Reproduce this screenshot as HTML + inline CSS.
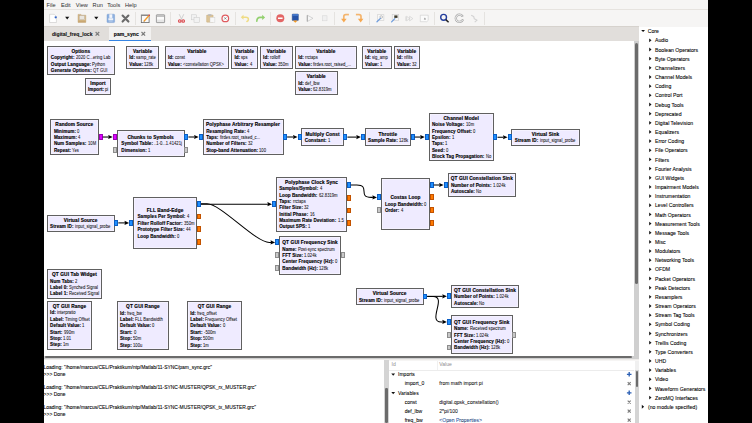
<!DOCTYPE html><html><head><meta charset="utf-8"><style>
*{margin:0;padding:0;box-sizing:border-box}
html,body{width:752px;height:423px;overflow:hidden;background:#000}
body{position:relative;font-family:"Liberation Sans",sans-serif;color:#000}
.a{position:absolute}
.blk{position:absolute;background:#efebff;border:1px solid #606060;box-shadow:inset 0 0 0 0.5px #fbfaff}
.bt{position:absolute;text-align:center;font-weight:bold;font-size:4.75px;line-height:6px;white-space:nowrap;letter-spacing:0.12px;-webkit-text-stroke:0.15px #000}
.br{position:absolute;font-size:4.6px;line-height:6px;white-space:nowrap;color:#222}
.br b{color:#000;letter-spacing:0.05px;-webkit-text-stroke:0.12px #000}
.br span{display:inline-block;transform:scaleX(0.91);transform-origin:0 50%;color:#111;-webkit-text-stroke:0.05px #111}
.pt{position:absolute;width:4.1px;height:5.9px;border:0.6px solid}
.conn{position:absolute;left:0;top:0}
.tt{position:absolute;font-size:5.15px;line-height:7px;white-space:nowrap;color:#000;-webkit-text-stroke:0.08px #000}
.tri-r{position:absolute;width:0;height:0;border-left:2.8px solid #111;border-top:1.9px solid transparent;border-bottom:1.9px solid transparent}
.tri-d{position:absolute;width:0;height:0;border-top:2.8px solid #111;border-left:1.9px solid transparent;border-right:1.9px solid transparent}
.menu{position:absolute;top:1.6px;font-size:5.6px;line-height:7px;color:#2e2e2e}
.sep{position:absolute;top:12px;width:0.7px;height:13px;background:#dcdad6}
.con{position:absolute;font-size:4.96px;line-height:6px;white-space:nowrap;color:#000;-webkit-text-stroke:0.08px #000}
.vt{position:absolute;font-size:5.05px;line-height:7px;white-space:nowrap;color:#000;-webkit-text-stroke:0.06px #000}
</style></head><body>
<div class="a" style="left:44px;top:0;width:664px;height:423px;background:#f6f5f4"></div>
<div class="a" style="left:44px;top:9px;width:664px;height:0.8px;background:#e6e3df"></div>
<div class="menu" style="left:46.5px">File</div>
<div class="menu" style="left:61px">Edit</div>
<div class="menu" style="left:75.8px">View</div>
<div class="menu" style="left:92.6px">Run</div>
<div class="menu" style="left:107.2px">Tools</div>
<div class="menu" style="left:125px">Help</div>
<div class="a" style="left:44px;top:26.4px;width:595px;height:0.8px;background:#d6d2cd"></div>
<div class="a" style="left:44px;top:27px;width:595px;height:14px;background:#e1dedb"></div>
<div class="a" style="left:109.2px;top:27px;width:41.8px;height:14px;background:#f2f1f0"></div>
<div class="a" style="left:109.2px;top:40px;width:41.8px;height:1.4px;background:#3584e4"></div>
<div class="a" style="left:52px;top:30.5px;font-size:5.1px;font-weight:bold;line-height:7px;color:#111;-webkit-text-stroke:0.1px #111">digital_freq_lock</div>
<div class="a" style="left:113.8px;top:30.5px;font-size:5.1px;font-weight:bold;line-height:7px;color:#000;-webkit-text-stroke:0.1px #000">pam_sync</div>
<svg class="a" style="left:0;top:0" width="200" height="45" viewBox="0 0 200 45"><path d="M95.6,32 l3.6,3.6 M99.2,32 l-3.6,3.6 M141.5,32 l3.6,3.6 M145.1,32 l-3.6,3.6" stroke="#7c7c7c" stroke-width="1.2"/></svg>
<div class="a" style="left:44px;top:41px;width:590px;height:314.5px;background:#fff"></div>
<div class="a" style="left:634px;top:41px;width:5px;height:318px;background:#cfcfcf"></div>
<div class="a" style="left:634.8px;top:43px;width:3px;height:241px;background:#6b6b6b;border-radius:1.5px"></div>
<div class="a" style="left:44px;top:355.5px;width:590px;height:3.5px;background:#cfcfcf"></div>
<div class="a" style="left:45.2px;top:355.6px;width:587px;height:2.6px;background:#6b6b6b;border-radius:1.3px"></div>
<div class="a" style="left:44px;top:358.5px;width:595px;height:1.8px;background:#edebe9"></div>
<div class="a" style="left:44px;top:360.3px;width:339.5px;height:63px;background:#fff"></div>
<div class="a" style="left:383.5px;top:360px;width:5.5px;height:63px;background:#d4d4d4"></div>
<div class="a" style="left:385px;top:388px;width:2.6px;height:35px;background:#6b6b6b;border-radius:1.3px"></div>
<div class="con" style="left:43.6px;top:365.10px">Loading: "/home/marcus/CEL/Praktikum/ntp/Matlab/11-SYNC/pam_sync.grc"</div>
<div class="con" style="left:43.6px;top:372.30px">&gt;&gt;&gt; Done</div>
<div class="con" style="left:43.6px;top:384.90px">Loading: "/home/marcus/CEL/Praktikum/ntp/Matlab/11-SYNC-MUSTER/QPSK_rx_MUSTER.grc"</div>
<div class="con" style="left:43.6px;top:392.30px">&gt;&gt;&gt; Done</div>
<div class="con" style="left:43.6px;top:405.10px">Loading: "/home/marcus/CEL/Praktikum/ntp/Matlab/11-SYNC-MUSTER/QPSK_tx_MUSTER.grc"</div>
<div class="con" style="left:43.6px;top:412.10px">&gt;&gt;&gt; Done</div>
<div class="a" style="left:389px;top:361px;width:250px;height:62px;background:#fff"></div>
<div class="a" style="left:389px;top:369.5px;width:245px;height:0.6px;background:#ececec"></div>
<div class="a" style="left:436.8px;top:361px;width:0.6px;height:8.5px;background:#f0f0f0"></div>
<div class="vt" style="left:391.5px;top:361.4px;color:#8c8c8c;-webkit-text-stroke:0">Id</div>
<div class="vt" style="left:439.3px;top:361.4px;color:#8c8c8c;-webkit-text-stroke:0">Value</div>
<svg class="a" style="left:0;top:0" width="752" height="423" viewBox="0 0 752 423" fill="#111"><path d="M391.30,373.60 L395.10,373.60 L393.20,375.70Z"/></svg>
<div class="vt" style="left:398px;top:371.10px">Imports</div>
<div class="vt" style="left:404.7px;top:380.40px">import_0</div>
<div class="vt" style="left:439.3px;top:380.40px;color:#222">from math import pi</div>
<svg class="a" style="left:0;top:0" width="752" height="423" viewBox="0 0 752 423" fill="#111"><path d="M391.30,392.10 L395.10,392.10 L393.20,394.20Z"/></svg>
<div class="vt" style="left:398px;top:389.60px">Variables</div>
<div class="vt" style="left:404.7px;top:398.60px">const</div>
<div class="vt" style="left:439.3px;top:398.60px;color:#222">digital.qpsk_constellation()</div>
<div class="vt" style="left:404.7px;top:407.80px">def_lbw</div>
<div class="vt" style="left:439.3px;top:407.80px;color:#222">2*pi/100</div>
<div class="vt" style="left:404.7px;top:416.60px">freq_bw</div>
<div class="vt" style="left:439.3px;top:416.60px;color:#2a5db0">&lt;Open Properties&gt;</div>
<svg class="a" style="left:0;top:0" width="752" height="423" viewBox="0 0 752 423"><path d="M626.9,374.30 h4.6 M629.2,372.00 v4.6" stroke="#2b5fb4" stroke-width="1.35"/><path d="M626.9,392.80 h4.6 M629.2,390.50 v4.6" stroke="#2b5fb4" stroke-width="1.35"/><path d="M627.7,382.10 l3,3 M630.7,382.10 l-3,3" stroke="#7a7a7a" stroke-width="1.1"/><path d="M627.7,400.60 l3,3 M630.7,400.60 l-3,3" stroke="#7a7a7a" stroke-width="1.1"/><path d="M627.7,409.70 l3,3 M630.7,409.70 l-3,3" stroke="#7a7a7a" stroke-width="1.1"/><path d="M627.7,418.70 l3,3 M630.7,418.70 l-3,3" stroke="#7a7a7a" stroke-width="1.1"/></svg>
<div class="a" style="left:634.5px;top:361px;width:4.5px;height:62px;background:#d4d4d4"></div>
<div class="a" style="left:634.5px;top:361px;width:4.5px;height:9px;background:#f0f0f0"></div>
<div class="a" style="left:635.5px;top:370.5px;width:2.4px;height:16px;background:#6b6b6b;border-radius:1.2px"></div>
<div class="a" style="left:639px;top:27px;width:69px;height:396px;background:#fff"></div>
<div class="tt" style="left:647.8px;top:28.30px">Core</div>
<div class="tt" style="left:655px;top:37.46px">Audio</div>
<div class="tt" style="left:655px;top:46.62px">Boolean Operators</div>
<div class="tt" style="left:655px;top:55.78px">Byte Operators</div>
<div class="tt" style="left:655px;top:64.94px">Channelizers</div>
<div class="tt" style="left:655px;top:74.10px">Channel Models</div>
<div class="tt" style="left:655px;top:83.26px">Coding</div>
<div class="tt" style="left:655px;top:92.42px">Control Port</div>
<div class="tt" style="left:655px;top:101.58px">Debug Tools</div>
<div class="tt" style="left:655px;top:110.74px">Deprecated</div>
<div class="tt" style="left:655px;top:119.90px">Digital Television</div>
<div class="tt" style="left:655px;top:129.06px">Equalizers</div>
<div class="tt" style="left:655px;top:138.22px">Error Coding</div>
<div class="tt" style="left:655px;top:147.38px">File Operators</div>
<div class="tt" style="left:655px;top:156.54px">Filters</div>
<div class="tt" style="left:655px;top:165.70px">Fourier Analysis</div>
<div class="tt" style="left:655px;top:174.86px">GUI Widgets</div>
<div class="tt" style="left:655px;top:184.02px">Impairment Models</div>
<div class="tt" style="left:655px;top:193.18px">Instrumentation</div>
<div class="tt" style="left:655px;top:202.34px">Level Controllers</div>
<div class="tt" style="left:655px;top:211.50px">Math Operators</div>
<div class="tt" style="left:655px;top:220.66px">Measurement Tools</div>
<div class="tt" style="left:655px;top:229.82px">Message Tools</div>
<div class="tt" style="left:655px;top:238.98px">Misc</div>
<div class="tt" style="left:655px;top:248.14px">Modulators</div>
<div class="tt" style="left:655px;top:257.30px">Networking Tools</div>
<div class="tt" style="left:655px;top:266.46px">OFDM</div>
<div class="tt" style="left:655px;top:275.62px">Packet Operators</div>
<div class="tt" style="left:655px;top:284.78px">Peak Detectors</div>
<div class="tt" style="left:655px;top:293.94px">Resamplers</div>
<div class="tt" style="left:655px;top:303.10px">Stream Operators</div>
<div class="tt" style="left:655px;top:312.26px">Stream Tag Tools</div>
<div class="tt" style="left:655px;top:321.42px">Symbol Coding</div>
<div class="tt" style="left:655px;top:330.58px">Synchronizers</div>
<div class="tt" style="left:655px;top:339.74px">Trellis Coding</div>
<div class="tt" style="left:655px;top:348.90px">Type Converters</div>
<div class="tt" style="left:655px;top:358.06px">UHD</div>
<div class="tt" style="left:655px;top:367.22px">Variables</div>
<div class="tt" style="left:655px;top:376.38px">Video</div>
<div class="tt" style="left:655px;top:385.54px">Waveform Generators</div>
<div class="tt" style="left:655px;top:394.70px">ZeroMQ Interfaces</div>
<div class="tt" style="left:648px;top:403.86px">(no module specified)</div>
<svg class="a" style="left:0;top:0" width="752" height="423" viewBox="0 0 752 423" fill="#111"><path d="M641.20,30.00 L645.00,30.00 L643.10,32.10Z"/><path d="M649.20,38.46 L651.50,40.36 L649.20,42.26Z"/><path d="M649.20,47.62 L651.50,49.52 L649.20,51.42Z"/><path d="M649.20,56.78 L651.50,58.68 L649.20,60.58Z"/><path d="M649.20,65.94 L651.50,67.84 L649.20,69.74Z"/><path d="M649.20,75.10 L651.50,77.00 L649.20,78.90Z"/><path d="M649.20,84.26 L651.50,86.16 L649.20,88.06Z"/><path d="M649.20,93.42 L651.50,95.32 L649.20,97.22Z"/><path d="M649.20,102.58 L651.50,104.48 L649.20,106.38Z"/><path d="M649.20,111.74 L651.50,113.64 L649.20,115.54Z"/><path d="M649.20,120.90 L651.50,122.80 L649.20,124.70Z"/><path d="M649.20,130.06 L651.50,131.96 L649.20,133.86Z"/><path d="M649.20,139.22 L651.50,141.12 L649.20,143.02Z"/><path d="M649.20,148.38 L651.50,150.28 L649.20,152.18Z"/><path d="M649.20,157.54 L651.50,159.44 L649.20,161.34Z"/><path d="M649.20,166.70 L651.50,168.60 L649.20,170.50Z"/><path d="M649.20,175.86 L651.50,177.76 L649.20,179.66Z"/><path d="M649.20,185.02 L651.50,186.92 L649.20,188.82Z"/><path d="M649.20,194.18 L651.50,196.08 L649.20,197.98Z"/><path d="M649.20,203.34 L651.50,205.24 L649.20,207.14Z"/><path d="M649.20,212.50 L651.50,214.40 L649.20,216.30Z"/><path d="M649.20,221.66 L651.50,223.56 L649.20,225.46Z"/><path d="M649.20,230.82 L651.50,232.72 L649.20,234.62Z"/><path d="M649.20,239.98 L651.50,241.88 L649.20,243.78Z"/><path d="M649.20,249.14 L651.50,251.04 L649.20,252.94Z"/><path d="M649.20,258.30 L651.50,260.20 L649.20,262.10Z"/><path d="M649.20,267.46 L651.50,269.36 L649.20,271.26Z"/><path d="M649.20,276.62 L651.50,278.52 L649.20,280.42Z"/><path d="M649.20,285.78 L651.50,287.68 L649.20,289.58Z"/><path d="M649.20,294.94 L651.50,296.84 L649.20,298.74Z"/><path d="M649.20,304.10 L651.50,306.00 L649.20,307.90Z"/><path d="M649.20,313.26 L651.50,315.16 L649.20,317.06Z"/><path d="M649.20,322.42 L651.50,324.32 L649.20,326.22Z"/><path d="M649.20,331.58 L651.50,333.48 L649.20,335.38Z"/><path d="M649.20,340.74 L651.50,342.64 L649.20,344.54Z"/><path d="M649.20,349.90 L651.50,351.80 L649.20,353.70Z"/><path d="M649.20,359.06 L651.50,360.96 L649.20,362.86Z"/><path d="M649.20,368.22 L651.50,370.12 L649.20,372.02Z"/><path d="M649.20,377.38 L651.50,379.28 L649.20,381.18Z"/><path d="M649.20,386.54 L651.50,388.44 L649.20,390.34Z"/><path d="M649.20,395.70 L651.50,397.60 L649.20,399.50Z"/><path d="M641.80,404.86 L644.10,406.76 L641.80,408.66Z"/></svg>
<div class="blk" style="left:46.60px;top:45.90px;width:68.40px;height:29.40px"></div>
<div class="bt" style="left:47.10px;top:48.85px;width:67.40px">Options</div>
<div class="br" style="left:50.80px;top:55.35px"><b>Copyright:</b> <span>2020 C...ering Lab</span></div>
<div class="br" style="left:50.80px;top:61.73px"><b>Output Language:</b> <span>Python</span></div>
<div class="br" style="left:50.80px;top:68.11px"><b>Generate Options:</b> <span>QT GUI</span></div>
<div class="blk" style="left:84.60px;top:77.50px;width:26.90px;height:17.30px"></div>
<div class="bt" style="left:85.10px;top:80.79px;width:25.90px">Import</div>
<div class="br" style="left:88.00px;top:87.29px"><b>Import:</b> <span>pi</span></div>
<div class="blk" style="left:125.90px;top:45.90px;width:33.40px;height:23.30px"></div>
<div class="bt" style="left:126.40px;top:48.99px;width:32.40px">Variable</div>
<div class="br" style="left:129.30px;top:55.49px"><b>Id:</b> <span>samp_rate</span></div>
<div class="br" style="left:129.30px;top:61.87px"><b>Value:</b> <span>128k</span></div>
<div class="blk" style="left:164.50px;top:45.90px;width:64.80px;height:23.30px"></div>
<div class="bt" style="left:165.00px;top:48.99px;width:63.80px">Variable</div>
<div class="br" style="left:167.90px;top:55.49px"><b>Id:</b> <span>const</span></div>
<div class="br" style="left:167.90px;top:61.87px"><b>Value:</b> <span>&lt;constellation QPSK&gt;</span></div>
<div class="blk" style="left:231.00px;top:45.90px;width:27.30px;height:23.30px"></div>
<div class="bt" style="left:231.50px;top:48.99px;width:26.30px">Variable</div>
<div class="br" style="left:234.40px;top:55.49px"><b>Id:</b> <span>sps</span></div>
<div class="br" style="left:234.40px;top:61.87px"><b>Value:</b> <span>4</span></div>
<div class="blk" style="left:259.70px;top:45.90px;width:33.40px;height:23.30px"></div>
<div class="bt" style="left:260.20px;top:48.99px;width:32.40px">Variable</div>
<div class="br" style="left:263.10px;top:55.49px"><b>Id:</b> <span>rolloff</span></div>
<div class="br" style="left:263.10px;top:61.87px"><b>Value:</b> <span>350m</span></div>
<div class="blk" style="left:294.80px;top:45.90px;width:62.30px;height:23.30px"></div>
<div class="bt" style="left:295.30px;top:48.99px;width:61.30px">Variable</div>
<div class="br" style="left:298.20px;top:55.49px"><b>Id:</b> <span>rrctaps</span></div>
<div class="br" style="left:298.20px;top:61.87px"><b>Value:</b> <span>firdes.root_raised_...</span></div>
<div class="blk" style="left:361.70px;top:45.90px;width:30.20px;height:23.30px"></div>
<div class="bt" style="left:362.20px;top:48.99px;width:29.20px">Variable</div>
<div class="br" style="left:365.10px;top:55.49px"><b>Id:</b> <span>sig_amp</span></div>
<div class="br" style="left:365.10px;top:61.87px"><b>Value:</b> <span>1</span></div>
<div class="blk" style="left:393.60px;top:45.90px;width:26.30px;height:23.30px"></div>
<div class="bt" style="left:394.10px;top:48.99px;width:25.30px">Variable</div>
<div class="br" style="left:397.00px;top:55.49px"><b>Id:</b> <span>nfilts</span></div>
<div class="br" style="left:397.00px;top:61.87px"><b>Value:</b> <span>32</span></div>
<div class="blk" style="left:294.80px;top:70.90px;width:43.00px;height:23.90px"></div>
<div class="bt" style="left:295.30px;top:74.30px;width:42.00px">Variable</div>
<div class="br" style="left:298.20px;top:80.80px"><b>Id:</b> <span>def_lbw</span></div>
<div class="br" style="left:298.20px;top:87.18px"><b>Value:</b> <span>62.8319m</span></div>
<div class="blk" style="left:49.60px;top:118.70px;width:49.50px;height:36.60px"></div>
<div class="bt" style="left:50.10px;top:122.07px;width:48.50px">Random Source</div>
<div class="br" style="left:53.90px;top:128.57px"><b>Minimum:</b> <span>0</span></div>
<div class="br" style="left:53.90px;top:134.95px"><b>Maximum:</b> <span>4</span></div>
<div class="br" style="left:53.90px;top:141.33px"><b>Num Samples:</b> <span>10M</span></div>
<div class="br" style="left:53.90px;top:147.71px"><b>Repeat:</b> <span>Yes</span></div>
<div class="pt" style="left:98.60px;top:134.05px;background:#dd00ff;border-color:#9c00b8"></div>
<div class="blk" style="left:116.60px;top:129.90px;width:68.20px;height:27.00px"></div>
<div class="bt" style="left:117.10px;top:134.84px;width:67.20px">Chunks to Symbols</div>
<div class="br" style="left:121.30px;top:141.35px"><b>Symbol Table:</b> <span>..1-0...1.41421j</span></div>
<div class="br" style="left:121.30px;top:147.73px"><b>Dimension:</b> <span>1</span></div>
<div class="pt" style="left:113.00px;top:134.08px;background:#dd00ff;border-color:#9c00b8"></div>
<div class="pt" style="left:113.00px;top:146.83px;background:#c8c8c8;border-color:#8c8c8c"></div>
<div class="pt" style="left:184.30px;top:134.08px;background:#1e8fff;border-color:#0b5dc4"></div>
<div class="pt" style="left:184.30px;top:146.83px;background:#c8c8c8;border-color:#8c8c8c"></div>
<div class="blk" style="left:202.50px;top:118.70px;width:81.00px;height:36.60px"></div>
<div class="bt" style="left:203.00px;top:122.07px;width:80.00px">Polyphase Arbitrary Resampler</div>
<div class="br" style="left:206.20px;top:128.57px"><b>Resampling Rate:</b> <span>4</span></div>
<div class="br" style="left:206.20px;top:134.95px"><b>Taps:</b> <span>firdes.root_raised_c...</span></div>
<div class="br" style="left:206.20px;top:141.33px"><b>Number of Filters:</b> <span>32</span></div>
<div class="br" style="left:206.20px;top:147.71px"><b>Stop-band Attenuation:</b> <span>100</span></div>
<div class="pt" style="left:198.90px;top:134.05px;background:#1e8fff;border-color:#0b5dc4"></div>
<div class="pt" style="left:283.00px;top:134.05px;background:#1e8fff;border-color:#0b5dc4"></div>
<div class="blk" style="left:301.40px;top:128.30px;width:42.40px;height:17.40px"></div>
<div class="bt" style="left:301.90px;top:131.64px;width:41.40px">Multiply Const</div>
<div class="br" style="left:304.80px;top:138.14px"><b>Constant:</b> <span>1</span></div>
<div class="pt" style="left:297.80px;top:134.05px;background:#1e8fff;border-color:#0b5dc4"></div>
<div class="pt" style="left:343.30px;top:134.05px;background:#1e8fff;border-color:#0b5dc4"></div>
<div class="blk" style="left:364.70px;top:128.20px;width:46.40px;height:17.80px"></div>
<div class="bt" style="left:365.20px;top:131.73px;width:45.40px">Throttle</div>
<div class="br" style="left:368.10px;top:138.24px"><b>Sample Rate:</b> <span>128k</span></div>
<div class="pt" style="left:361.10px;top:134.15px;background:#1e8fff;border-color:#0b5dc4"></div>
<div class="pt" style="left:410.60px;top:134.15px;background:#1e8fff;border-color:#0b5dc4"></div>
<div class="blk" style="left:428.60px;top:112.80px;width:65.30px;height:48.50px"></div>
<div class="bt" style="left:429.10px;top:115.73px;width:64.30px">Channel Model</div>
<div class="br" style="left:432.00px;top:122.23px"><b>Noise Voltage:</b> <span>10m</span></div>
<div class="br" style="left:432.00px;top:128.62px"><b>Frequency Offset:</b> <span>0</span></div>
<div class="br" style="left:432.00px;top:135.00px"><b>Epsilon:</b> <span>1</span></div>
<div class="br" style="left:432.00px;top:141.38px"><b>Taps:</b> <span>1</span></div>
<div class="br" style="left:432.00px;top:147.75px"><b>Seed:</b> <span>0</span></div>
<div class="br" style="left:432.00px;top:154.13px"><b>Block Tag Propagation:</b> <span>No</span></div>
<div class="pt" style="left:425.00px;top:134.10px;background:#1e8fff;border-color:#0b5dc4"></div>
<div class="pt" style="left:493.40px;top:134.10px;background:#1e8fff;border-color:#0b5dc4"></div>
<div class="blk" style="left:511.40px;top:128.80px;width:68.20px;height:16.90px"></div>
<div class="bt" style="left:511.90px;top:131.89px;width:67.20px">Virtual Sink</div>
<div class="br" style="left:514.80px;top:138.39px"><b>Stream ID:</b> <span>input_signal_probe</span></div>
<div class="pt" style="left:507.80px;top:134.30px;background:#1e8fff;border-color:#0b5dc4"></div>
<div class="blk" style="left:46.70px;top:214.70px;width:68.00px;height:17.30px"></div>
<div class="bt" style="left:47.20px;top:217.98px;width:67.00px">Virtual Source</div>
<div class="br" style="left:50.10px;top:224.49px"><b>Stream ID:</b> <span>input_signal_probe</span></div>
<div class="pt" style="left:114.20px;top:220.40px;background:#1e8fff;border-color:#0b5dc4"></div>
<div class="blk" style="left:132.90px;top:197.10px;width:64.50px;height:51.60px"></div>
<div class="bt" style="left:133.40px;top:207.97px;width:63.50px">FLL Band-Edge</div>
<div class="br" style="left:137.50px;top:214.47px"><b>Samples Per Symbol:</b> <span>4</span></div>
<div class="br" style="left:137.50px;top:220.85px"><b>Filter Rolloff Factor:</b> <span>350m</span></div>
<div class="br" style="left:137.50px;top:227.23px"><b>Prototype Filter Size:</b> <span>44</span></div>
<div class="br" style="left:137.50px;top:233.61px"><b>Loop Bandwidth:</b> <span>0</span></div>
<div class="pt" style="left:129.30px;top:219.95px;background:#1e8fff;border-color:#0b5dc4"></div>
<div class="pt" style="left:196.90px;top:200.83px;background:#1e8fff;border-color:#0b5dc4"></div>
<div class="pt" style="left:196.90px;top:213.58px;background:#ff7a00;border-color:#c25200"></div>
<div class="pt" style="left:196.90px;top:226.33px;background:#ff7a00;border-color:#c25200"></div>
<div class="pt" style="left:196.90px;top:239.08px;background:#ff7a00;border-color:#c25200"></div>
<div class="blk" style="left:275.80px;top:176.50px;width:71.40px;height:55.30px"></div>
<div class="bt" style="left:276.30px;top:179.65px;width:70.40px">Polyphase Clock Sync</div>
<div class="br" style="left:279.20px;top:186.15px"><b>Samples/Symbol:</b> <span>4</span></div>
<div class="br" style="left:279.20px;top:192.53px"><b>Loop Bandwidth:</b> <span>62.8319m</span></div>
<div class="br" style="left:279.20px;top:198.91px"><b>Taps:</b> <span>rrctaps</span></div>
<div class="br" style="left:279.20px;top:205.29px"><b>Filter Size:</b> <span>32</span></div>
<div class="br" style="left:279.20px;top:211.67px"><b>Initial Phase:</b> <span>16</span></div>
<div class="br" style="left:279.20px;top:218.05px"><b>Maximum Rate Deviation:</b> <span>1.5</span></div>
<div class="br" style="left:279.20px;top:224.43px"><b>Output SPS:</b> <span>1</span></div>
<div class="pt" style="left:272.20px;top:201.20px;background:#1e8fff;border-color:#0b5dc4"></div>
<div class="pt" style="left:346.70px;top:182.08px;background:#1e8fff;border-color:#0b5dc4"></div>
<div class="pt" style="left:346.70px;top:194.83px;background:#ff7a00;border-color:#c25200"></div>
<div class="pt" style="left:346.70px;top:207.58px;background:#ff7a00;border-color:#c25200"></div>
<div class="pt" style="left:346.70px;top:220.33px;background:#ff7a00;border-color:#c25200"></div>
<div class="blk" style="left:380.80px;top:177.70px;width:49.30px;height:52.10px"></div>
<div class="bt" style="left:381.30px;top:195.19px;width:48.30px">Costas Loop</div>
<div class="br" style="left:384.90px;top:201.70px"><b>Loop Bandwidth:</b> <span>0</span></div>
<div class="br" style="left:384.90px;top:208.08px"><b>Order:</b> <span>4</span></div>
<div class="pt" style="left:377.20px;top:194.43px;background:#1e8fff;border-color:#0b5dc4"></div>
<div class="pt" style="left:377.20px;top:207.18px;background:#c8c8c8;border-color:#8c8c8c"></div>
<div class="pt" style="left:429.60px;top:181.68px;background:#1e8fff;border-color:#0b5dc4"></div>
<div class="pt" style="left:429.60px;top:194.43px;background:#ff7a00;border-color:#c25200"></div>
<div class="pt" style="left:429.60px;top:207.18px;background:#ff7a00;border-color:#c25200"></div>
<div class="pt" style="left:429.60px;top:219.93px;background:#ff7a00;border-color:#c25200"></div>
<div class="blk" style="left:447.50px;top:173.00px;width:68.70px;height:24.00px"></div>
<div class="bt" style="left:448.00px;top:176.44px;width:67.70px">QT GUI Constellation Sink</div>
<div class="br" style="left:450.90px;top:182.95px"><b>Number of Points:</b> <span>1.024k</span></div>
<div class="br" style="left:450.90px;top:189.33px"><b>Autoscale:</b> <span>No</span></div>
<div class="pt" style="left:443.90px;top:182.05px;background:#1e8fff;border-color:#0b5dc4"></div>
<div class="blk" style="left:278.90px;top:235.50px;width:62.40px;height:39.30px"></div>
<div class="bt" style="left:279.40px;top:240.22px;width:61.40px">QT GUI Frequency Sink</div>
<div class="br" style="left:282.30px;top:246.72px"><b>Name:</b> <span>Post-sync spectrum</span></div>
<div class="br" style="left:282.30px;top:253.10px"><b>FFT Size:</b> <span>1.024k</span></div>
<div class="br" style="left:282.30px;top:259.48px"><b>Center Frequency (Hz):</b> <span>0</span></div>
<div class="br" style="left:282.30px;top:265.86px"><b>Bandwidth (Hz):</b> <span>128k</span></div>
<div class="pt" style="left:275.30px;top:239.45px;background:#1e8fff;border-color:#0b5dc4"></div>
<div class="pt" style="left:275.30px;top:252.20px;background:#c8c8c8;border-color:#8c8c8c"></div>
<div class="pt" style="left:275.30px;top:264.95px;background:#c8c8c8;border-color:#8c8c8c"></div>
<div class="pt" style="left:340.80px;top:252.20px;background:#c8c8c8;border-color:#8c8c8c"></div>
<div class="blk" style="left:46.70px;top:268.90px;width:55.60px;height:29.90px"></div>
<div class="bt" style="left:47.20px;top:272.10px;width:54.60px">QT GUI Tab Widget</div>
<div class="br" style="left:50.10px;top:278.60px"><b>Num Tabs:</b> <span>2</span></div>
<div class="br" style="left:50.10px;top:284.98px"><b>Label 0:</b> <span>Synched Signal</span></div>
<div class="br" style="left:50.10px;top:291.36px"><b>Label 1:</b> <span>Received Signal</span></div>
<div class="blk" style="left:46.70px;top:300.70px;width:45.70px;height:49.20px"></div>
<div class="bt" style="left:47.20px;top:303.98px;width:44.70px">QT GUI Range</div>
<div class="br" style="left:50.10px;top:310.48px"><b>Id:</b> <span>interpratio</span></div>
<div class="br" style="left:50.10px;top:316.86px"><b>Label:</b> <span>Timing Offset</span></div>
<div class="br" style="left:50.10px;top:323.24px"><b>Default Value:</b> <span>1</span></div>
<div class="br" style="left:50.10px;top:329.62px"><b>Start:</b> <span>990m</span></div>
<div class="br" style="left:50.10px;top:336.00px"><b>Stop:</b> <span>1.01</span></div>
<div class="br" style="left:50.10px;top:342.38px"><b>Step:</b> <span>1m</span></div>
<div class="blk" style="left:116.60px;top:301.00px;width:52.60px;height:48.90px"></div>
<div class="bt" style="left:117.10px;top:304.13px;width:51.60px">QT GUI Range</div>
<div class="br" style="left:120.00px;top:310.63px"><b>Id:</b> <span>freq_bw</span></div>
<div class="br" style="left:120.00px;top:317.01px"><b>Label:</b> <span>FLL Bandwidth</span></div>
<div class="br" style="left:120.00px;top:323.39px"><b>Default Value:</b> <span>0</span></div>
<div class="br" style="left:120.00px;top:329.77px"><b>Start:</b> <span>0</span></div>
<div class="br" style="left:120.00px;top:336.15px"><b>Stop:</b> <span>50m</span></div>
<div class="br" style="left:120.00px;top:342.53px"><b>Step:</b> <span>100u</span></div>
<div class="blk" style="left:186.80px;top:301.00px;width:55.50px;height:48.90px"></div>
<div class="bt" style="left:187.30px;top:304.13px;width:54.50px">QT GUI Range</div>
<div class="br" style="left:190.20px;top:310.63px"><b>Id:</b> <span>freq_offset</span></div>
<div class="br" style="left:190.20px;top:317.01px"><b>Label:</b> <span>Frequency Offset</span></div>
<div class="br" style="left:190.20px;top:323.39px"><b>Default Value:</b> <span>0</span></div>
<div class="br" style="left:190.20px;top:329.77px"><b>Start:</b> <span>-500m</span></div>
<div class="br" style="left:190.20px;top:336.15px"><b>Stop:</b> <span>500m</span></div>
<div class="br" style="left:190.20px;top:342.53px"><b>Step:</b> <span>1m</span></div>
<div class="blk" style="left:355.60px;top:287.80px;width:68.00px;height:17.40px"></div>
<div class="bt" style="left:356.10px;top:291.13px;width:67.00px">Virtual Source</div>
<div class="br" style="left:359.00px;top:297.63px"><b>Stream ID:</b> <span>input_signal_probe</span></div>
<div class="pt" style="left:423.10px;top:293.55px;background:#1e8fff;border-color:#0b5dc4"></div>
<div class="blk" style="left:450.70px;top:284.80px;width:68.60px;height:23.10px"></div>
<div class="bt" style="left:451.20px;top:287.79px;width:67.60px">QT GUI Constellation Sink</div>
<div class="br" style="left:454.10px;top:294.29px"><b>Number of Points:</b> <span>1.024k</span></div>
<div class="br" style="left:454.10px;top:300.67px"><b>Autoscale:</b> <span>No</span></div>
<div class="pt" style="left:447.10px;top:293.40px;background:#1e8fff;border-color:#0b5dc4"></div>
<div class="blk" style="left:450.70px;top:315.10px;width:62.20px;height:39.20px"></div>
<div class="bt" style="left:451.20px;top:319.76px;width:61.20px">QT GUI Frequency Sink</div>
<div class="br" style="left:454.10px;top:326.26px"><b>Name:</b> <span>Received spectrum</span></div>
<div class="br" style="left:454.10px;top:332.64px"><b>FFT Size:</b> <span>1.024k</span></div>
<div class="br" style="left:454.10px;top:339.02px"><b>Center Frequency (Hz):</b> <span>0</span></div>
<div class="br" style="left:454.10px;top:345.40px"><b>Bandwidth (Hz):</b> <span>128k</span></div>
<div class="pt" style="left:447.10px;top:319.00px;background:#1e8fff;border-color:#0b5dc4"></div>
<div class="pt" style="left:447.10px;top:331.75px;background:#c8c8c8;border-color:#8c8c8c"></div>
<div class="pt" style="left:447.10px;top:344.50px;background:#c8c8c8;border-color:#8c8c8c"></div>
<div class="pt" style="left:512.40px;top:331.75px;background:#c8c8c8;border-color:#8c8c8c"></div>
<svg class="conn" width="752" height="423" viewBox="0 0 752 423"><path d="M102.70,137.03 L108.70,137.03" fill="none" stroke="#000" stroke-width="1.05"/><path d="M112.80,137.03 L108.20,134.93 L108.70,137.03 L108.20,139.12 Z" fill="#000"/><path d="M188.40,137.00 L194.60,137.00" fill="none" stroke="#000" stroke-width="1.05"/><path d="M198.70,137.00 L194.10,134.90 L194.60,137.00 L194.10,139.10 Z" fill="#000"/><path d="M287.10,137.00 L293.50,137.00" fill="none" stroke="#000" stroke-width="1.05"/><path d="M297.60,137.00 L293.00,134.90 L293.50,137.00 L293.00,139.10 Z" fill="#000"/><path d="M347.40,137.10 L356.80,137.10" fill="none" stroke="#000" stroke-width="1.05"/><path d="M360.90,137.10 L356.30,135.00 L356.80,137.10 L356.30,139.20 Z" fill="#000"/><path d="M414.70,137.05 L420.70,137.05" fill="none" stroke="#000" stroke-width="1.05"/><path d="M424.80,137.05 L420.20,134.95 L420.70,137.05 L420.20,139.15 Z" fill="#000"/><path d="M497.50,137.25 L503.50,137.25" fill="none" stroke="#000" stroke-width="1.05"/><path d="M507.60,137.25 L503.00,135.15 L503.50,137.25 L503.00,139.35 Z" fill="#000"/><path d="M118.30,222.90 L125.00,222.90" fill="none" stroke="#000" stroke-width="1.05"/><path d="M129.10,222.90 L124.50,220.80 L125.00,222.90 L124.50,225.00 Z" fill="#000"/><path d="M201.00,204.15 L267.90,204.15" fill="none" stroke="#000" stroke-width="1.05"/><path d="M272.00,204.15 L267.40,202.05 L267.90,204.15 L267.40,206.25 Z" fill="#000"/><path d="M201.00,203.78 L207.00,203.78 C221.00,203.78 255.30,242.40 269.30,242.40 L271.00,242.40" fill="none" stroke="#000" stroke-width="1.05"/><path d="M275.10,242.40 L270.50,240.30 L271.00,242.40 L270.50,244.50 Z" fill="#000"/><path d="M350.80,185.03 L356.80,185.03 C370.80,185.03 357.20,197.38 371.20,197.38 L372.90,197.38" fill="none" stroke="#000" stroke-width="1.05"/><path d="M377.00,197.38 L372.40,195.28 L372.90,197.38 L372.40,199.47 Z" fill="#000"/><path d="M433.70,185.00 L439.60,185.00" fill="none" stroke="#000" stroke-width="1.05"/><path d="M443.70,185.00 L439.10,182.90 L439.60,185.00 L439.10,187.10 Z" fill="#000"/><path d="M427.20,296.35 L442.80,296.35" fill="none" stroke="#000" stroke-width="1.05"/><path d="M446.90,296.35 L442.30,294.25 L442.80,296.35 L442.30,298.45 Z" fill="#000"/><path d="M427.20,296.50 L433.20,296.50 C447.20,296.50 427.10,321.95 441.10,321.95 L442.80,321.95" fill="none" stroke="#000" stroke-width="1.05"/><path d="M446.90,321.95 L442.30,319.85 L442.80,321.95 L442.30,324.05 Z" fill="#000"/></svg>
<svg class="a" style="left:0;top:0" width="752" height="30" viewBox="0 0 752 30">
<!-- separators -->
<g fill="#dedbd7"><rect x="135.2" y="12" width="0.7" height="13"/><rect x="170.3" y="12" width="0.7" height="13"/><rect x="235" y="12" width="0.7" height="13"/><rect x="270.2" y="12" width="0.7" height="13"/><rect x="334.1" y="12" width="0.7" height="13"/><rect x="369.2" y="12" width="0.7" height="13"/><rect x="434.2" y="12" width="0.7" height="13"/><rect x="484" y="12" width="0.7" height="13"/></g>
<!-- new -->
<path d="M49.6,14.3 h4.6 l2.2,2.2 v6 h-6.8z" fill="#fff" stroke="#bdbdbd" stroke-width="0.5"/><circle cx="55.7" cy="17.3" r="1.15" fill="#3466c8"/>
<path d="M65.1,16.8 h4.2 l-2.1,2.7z" fill="#111"/>
<!-- open -->
<path d="M78,14.4 h3 l0.8,0.8 h4 v7.2 h-7.8z" fill="#d6b988" stroke="#b8996a" stroke-width="0.4"/><rect x="79.3" y="15.6" width="5.3" height="4.2" fill="#e9e6e0" stroke="#a89a80" stroke-width="0.3"/><rect x="78.2" y="20.6" width="7.5" height="1.6" fill="#c9a772"/>
<path d="M94.2,16.8 h4.2 l-2.1,2.7z" fill="#111"/>
<!-- save -->
<rect x="107" y="14.2" width="7.6" height="8.4" rx="0.8" fill="#8db0e0" stroke="#6d93c8" stroke-width="0.4"/><rect x="109.3" y="14.3" width="3" height="3.6" fill="#f4f6fa"/><rect x="108.4" y="18.2" width="4.8" height="2" fill="#eef2f8"/><rect x="109" y="20.4" width="3.6" height="1.2" fill="#b9cdea"/>
<!-- close -->
<path d="M122.6,15.6 L128.4,21.6 M128.4,15.6 L122.6,21.6" stroke="#6a6a6a" stroke-width="2.1" stroke-linecap="round"/>
<!-- edit -->
<rect x="141.3" y="15" width="7.8" height="7.6" fill="#fafafa" stroke="#6a6a6a" stroke-width="0.8"/><rect x="141.3" y="15" width="7.8" height="1" fill="#8a8a8a"/><path d="M144.2,21 L148.6,16" stroke="#f39c2a" stroke-width="1.3" stroke-linecap="round"/><path d="M143.6,21.6 l0.9,-0.2 l-0.6,-0.7z" fill="#555"/><circle cx="149.3" cy="15.2" r="0.75" fill="#e8343a"/>
<!-- window -->
<rect x="156.4" y="14.8" width="8.2" height="7.8" rx="0.4" fill="#e6e6e6" stroke="#8a8a8a" stroke-width="0.8"/><rect x="157" y="15.4" width="7" height="1.4" fill="#b9b9b9"/><rect x="157" y="17" width="7" height="2.6" fill="#fbfbfb"/>
<!-- cut -->
<circle cx="179.8" cy="21" r="1.25" fill="#fff" stroke="#d9474c" stroke-width="1.2"/><circle cx="183.2" cy="21" r="1.25" fill="#fff" stroke="#d9474c" stroke-width="1.2"/><path d="M179.2,14.2 L181.8,19.6 M183.8,14.2 L181.2,19.6" stroke="#c6c6c6" stroke-width="0.8"/>
<!-- copy -->
<rect x="191.3" y="14.8" width="5" height="5" fill="#f2f2f2" stroke="#c8c8c8" stroke-width="0.5"/><rect x="194" y="17.3" width="5.4" height="5" fill="#f2f2f2" stroke="#c8c8c8" stroke-width="0.5"/>
<!-- paste -->
<rect x="206.6" y="15" width="6.5" height="7.2" rx="0.5" fill="#dcc497" stroke="#c4a878" stroke-width="0.4"/><rect x="208.2" y="14.2" width="3.3" height="1.6" fill="#bbb"/><rect x="210" y="17.3" width="4.9" height="5.2" fill="#f7f7f7" stroke="#c8c8c8" stroke-width="0.4"/>
<!-- delete -->
<circle cx="225.3" cy="18.4" r="3.3" fill="#fff" stroke="#df5b5f" stroke-width="1.25"/><path d="M224.2,17.3 L226.4,19.5 M226.4,17.3 L224.2,19.5" stroke="#555" stroke-width="0.6"/>
<!-- undo/redo -->
<path d="M242.8,17.3 h3.1 q2.5,0 2.5,2.1 q0,1.5 -1.5,2.1" fill="none" stroke="#efdc84" stroke-width="1.5" stroke-linecap="round"/><path d="M240.8,17.3 l2.7,-2.5 v5z" fill="#efdc84"/>
<path d="M262.6,17.4 h-2.6 q-3,0 -3.2,3.9" fill="none" stroke="#92d06e" stroke-width="1.6" stroke-linecap="round"/><path d="M265.1,17.4 l-2.9,-2.7 v5.4z" fill="#92d06e"/>
<!-- stop red -->
<circle cx="280.3" cy="18.3" r="4" fill="#e36565"/><rect x="278" y="17.5" width="4.6" height="1.5" fill="#fff"/>
<!-- generate -->
<rect x="292.2" y="14" width="6.2" height="6.6" rx="0.7" fill="#2553a8" stroke="#1f3f7a" stroke-width="0.4"/><rect x="292.4" y="14.2" width="5.8" height="1.5" fill="#4f82d2"/><path d="M293,20.5 h4.6 l-2.3,2.2z" fill="#f59a24"/>
<!-- play -->
<path d="M307.3,15.2 L313,18.3 L307.3,21.5z" fill="#f6f6f6" stroke="#bdbdbd" stroke-width="0.6"/><path d="M307.3,15.2 v6.3" stroke="#9a9a9a" stroke-width="0.8"/>
<!-- stop -->
<rect x="322.4" y="15.8" width="4.6" height="5" fill="#f0f0f0" stroke="#d4d4d4" stroke-width="0.5"/>
<!-- rotate -->
<path d="M348.9,14.6 h-3.2 q-1.9,0 -1.9,2 v2.6" fill="none" stroke="#f4b56e" stroke-width="1.7"/><path d="M345.6,16.1 h3.3" stroke="#f7f3ee" stroke-width="0.5"/><path d="M341.1,18.7 h5.5 l-2.75,3.8z" fill="#f6a850"/>
<path d="M355.9,14.6 h3.2 q1.9,0 1.9,2 v2.6" fill="none" stroke="#f4b56e" stroke-width="1.7"/><path d="M355.9,16.1 h3.3" stroke="#f7f3ee" stroke-width="0.5"/><path d="M357.9,18.7 h5.5 l-2.75,3.8z" fill="#f6a850"/>
<!-- find -->
<rect x="377.4" y="14.7" width="6.5" height="5.8" fill="#f7f7f7" stroke="#cfcfcf" stroke-width="0.6"/><circle cx="381.2" cy="17" r="1.3" fill="none" stroke="#9a9a9a" stroke-width="0.55"/><path d="M377,21.7 L380.4,18.4" stroke="#6f9ddd" stroke-width="1.3" stroke-linecap="round"/>
<rect x="392.2" y="14.5" width="6.5" height="6" fill="#f7f7f7" stroke="#cfcfcf" stroke-width="0.6"/><rect x="394.3" y="15.4" width="3.2" height="2.5" fill="#3d3a2c"/><path d="M391.6,21.9 L394.8,18.6" stroke="#6f9ddd" stroke-width="1.3" stroke-linecap="round"/>
<!-- dbl play -->
<path d="M405.8,16.3 v4.6 M406.6,16.3 L409.6,18.6 L406.6,20.9z M409.6,16.3 L412.9,18.6 L409.6,20.9z" fill="none" stroke="#cdcdcd" stroke-width="0.6"/>
<!-- eject-ish -->
<path d="M420.3,15.2 h7.9 v5.2 l-1.4,1.3 h-6.5z" fill="#fbfbfb" stroke="#c8c8c8" stroke-width="0.55"/><path d="M423.8,19.5 L424.9,17.6 L426,19.5z" fill="#8c8c8c"/>
<!-- magnifier -->
<circle cx="443.6" cy="17.3" r="2.9" fill="none" stroke="#233d9c" stroke-width="1.4"/><path d="M445.8,19.6 L448.6,22.2" stroke="#222" stroke-width="1.5"/>
<!-- reload -->
<path d="M462.3,15.9 a3.7,3.7 0 1 0 0.3,4.3" fill="none" stroke="#a9a9a9" stroke-width="2.3" stroke-linecap="round"/>
<path d="M462.3,15.9 a3.7,3.7 0 1 0 0.3,4.3" fill="none" stroke="#f4f4f4" stroke-width="1.0" stroke-linecap="round"/>
<!-- last -->
<path d="M471.2,15.2 l2.5,1.2 l0.6,2.4 l2.8,1.4 l-2.4,2" fill="none" stroke="#d2d2d2" stroke-width="1.1" stroke-linejoin="round"/>
</svg>
</body></html>
